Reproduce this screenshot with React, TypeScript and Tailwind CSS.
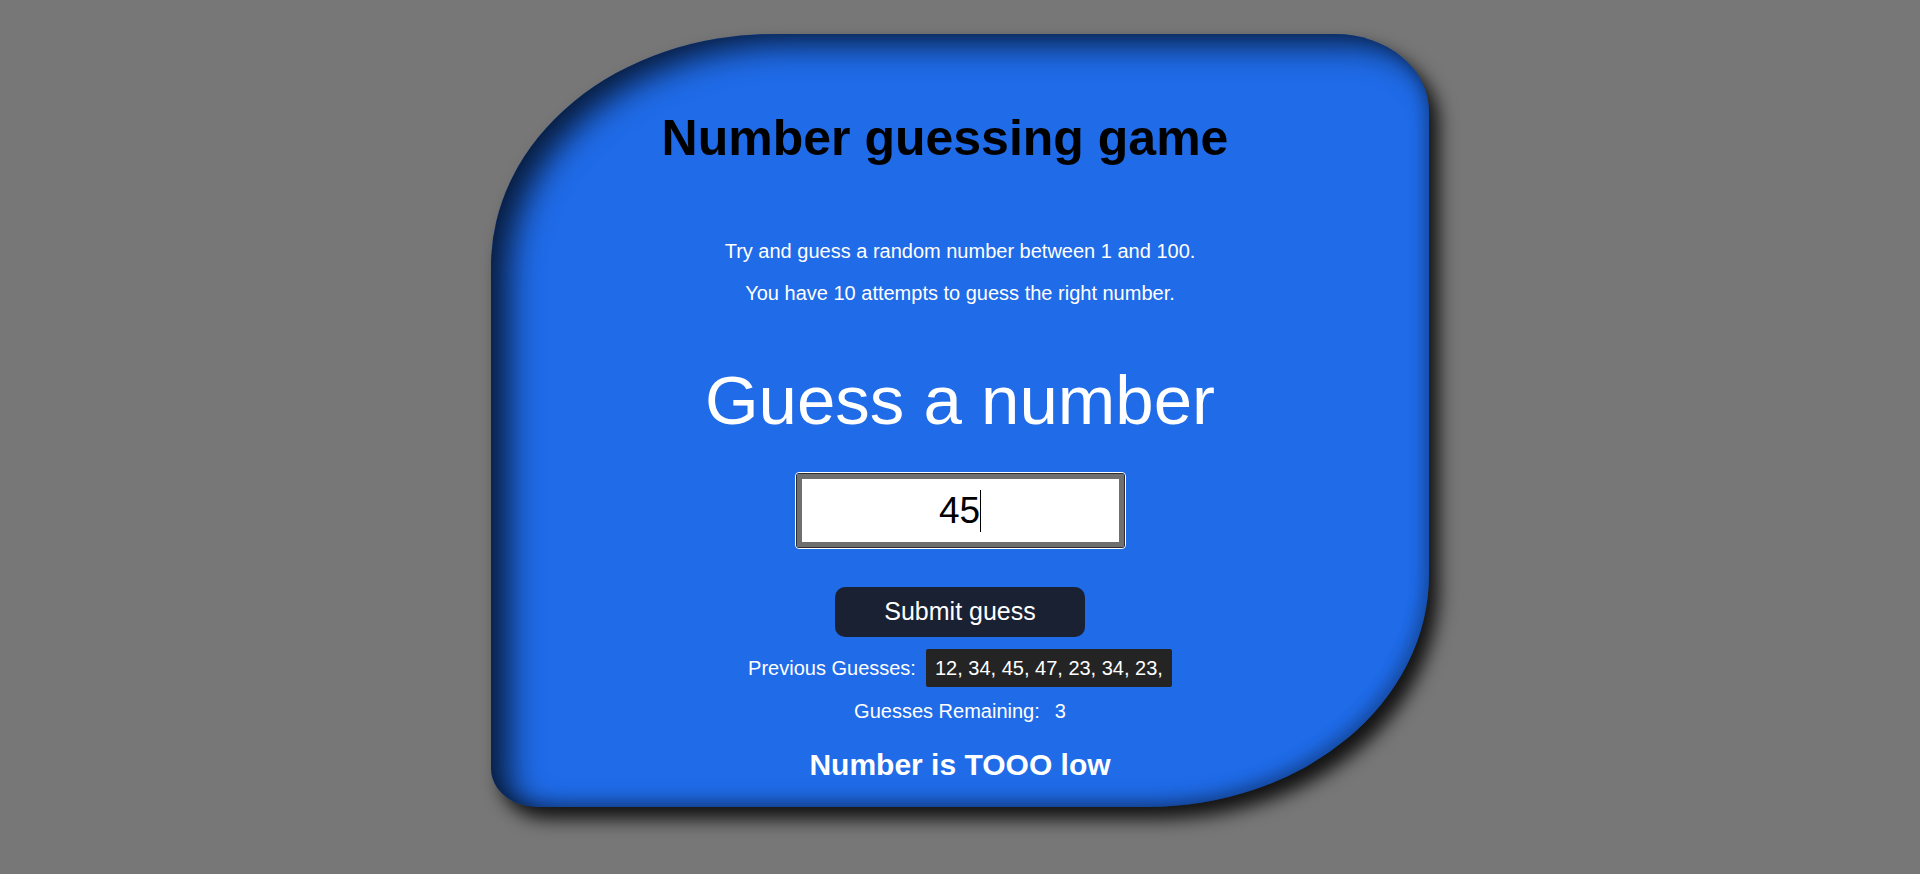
import React from 'react';

const guesses = [12, 34, 45, 47, 23, 34, 23];

const App: React.FC = () => {
  return (
    <div className="min-h-screen bg-[#777777] pt-[34px] font-['Liberation_Sans',Arial,sans-serif]">
      <div className="mx-auto flex w-[938px] flex-col items-center rounded-[30%_10%_30%_5%] bg-[#1f6be8] pt-[74px] pb-[24px] shadow-[inset_18px_10px_32px_rgba(0,0,0,0.75),inset_-6px_-6px_14px_rgba(0,0,0,0.22),10px_12px_18px_rgba(0,0,0,0.85)]">
        <h1 className="pr-[30px] text-[50px] font-bold leading-[60px] text-black">Number guessing game</h1>

        <p className="mt-[71px] text-[20px] leading-[24px] text-white">
          Try and guess a random number between 1 and 100.
        </p>
        <p className="mt-[18px] text-[20px] leading-[24px] text-white">
          You have 10 attempts to guess the right number.
        </p>

        <h2 className="mt-[56px] text-[69px] leading-[80px] text-white">Guess a number</h2>

        {/* focused input look */}
        <div className="mt-[31px] rounded-[4px] border border-white">
          <div className="rounded-[3px] border border-[#2e2e2e]">
            <div className="border-[5px] border-[#6f6f6f]">
              <div className="flex h-[63px] w-[317px] items-center justify-center bg-white text-black">
                <span className="text-[37px] leading-[63px]">45</span>
                <span className="h-[42px] w-px bg-black" />
              </div>
            </div>
          </div>
        </div>

        <button className="mt-[38px] h-[50px] w-[250px] rounded-[10px] bg-[#1a2133] text-[25px] text-white">
          Submit guess
        </button>

        <div className="mt-[12px] flex h-[38px] items-center gap-[10px] text-[20px] text-white">
          <span>Previous Guesses:</span>
          <span className="rounded-[2px] bg-[#242424] px-[9px] leading-[38px]">
            {guesses.map((g) => `${g},`).join(' ')}
          </span>
        </div>

        <div className="mt-[12px] flex gap-[15px] text-[20px] leading-[24px] text-white">
          <span>Guesses Remaining:</span>
          <span>3</span>
        </div>

        <p className="mt-[24px] text-[30px] font-bold leading-[36px] text-white">Number is TOOO low</p>
      </div>
    </div>
  );
};

export default App;
